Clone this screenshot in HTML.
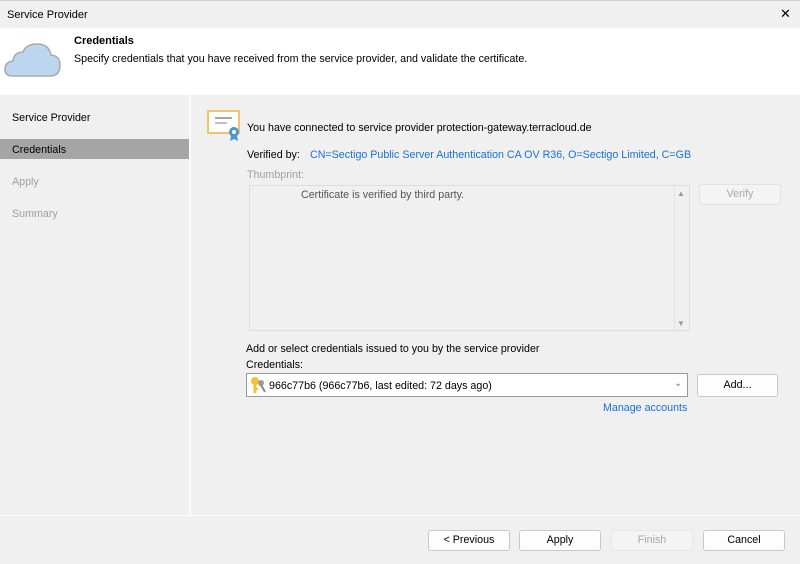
<!DOCTYPE html>
<html><head><style>
*{margin:0;padding:0;box-sizing:border-box}
body{width:800px;height:564px;position:relative;background:#f0f0f0;font-family:"Liberation Sans",sans-serif;font-size:10.7px;color:#000;overflow:hidden}
.a{position:absolute}
.btn{position:absolute;height:21px;border:1px solid #c8c8c8;border-radius:3px;background:#fdfdfd;text-align:center;line-height:19px;font-size:10.7px}
</style></head><body>
<div class="a" style="left:0;top:0;width:800px;height:28px;background:#f0f0f0;border-top:1px solid #cfcfcf"></div>
<div class="a" style="left:7px;top:9px;font-size:11px">Service Provider</div>
<div class="a" style="left:780px;top:6px;font-size:13px">✕</div>
<div class="a" style="left:0;top:28px;width:800px;height:67px;background:#fff"></div>
<svg class="a" style="left:4px;top:42px" width="58" height="36" viewBox="0 0 58 36"><path d="M8 34 Q1 34 1 27 Q1 20 9 19 Q10 10 19 10 Q22 2 33 2 Q45 2 47 13 Q56 14 56 23 Q56 34 46 34 Z" fill="#bcd6ef" stroke="#a9a9a9" stroke-width="1.5"/></svg>
<div class="a" style="left:74px;top:35px;font-weight:bold;font-size:11px">Credentials</div>
<div class="a" style="left:74px;top:53px">Specify credentials that you have received from the service provider, and validate the certificate.</div>
<div class="a" style="left:0;top:95px;width:189px;height:420px;background:#f0f0f0"></div>
<div class="a" style="left:189px;top:95px;width:2px;height:420px;background:#fafafa"></div>
<div class="a" style="left:12px;top:112px">Service Provider</div>
<div class="a" style="left:0;top:139px;width:189px;height:20px;background:#a5a5a5"></div>
<div class="a" style="left:12px;top:144px">Credentials</div>
<div class="a" style="left:12px;top:176px;color:#a0a0a0">Apply</div>
<div class="a" style="left:12px;top:208px;color:#a0a0a0">Summary</div>
<svg class="a" style="left:207px;top:110px" width="34" height="32"><rect x="1" y="1" width="31" height="22" fill="#fff" stroke="#f1c36a" stroke-width="2"/><line x1="8" y1="8" x2="25" y2="8" stroke="#888" stroke-width="1.5"/><line x1="8" y1="13" x2="20" y2="13" stroke="#aaa" stroke-width="1.5"/><circle cx="27" cy="22" r="5" fill="#4b95d0"/><path d="M24 26 L23 31 L27 29 L31 31 L30 26" fill="#4b95d0"/><circle cx="27" cy="22" r="2" fill="#fff"/></svg>
<div class="a" style="left:247px;top:122px">You have connected to service provider protection-gateway.terracloud.de</div>
<div class="a" style="left:247px;top:149px">Verified by:</div>
<div class="a" style="left:310px;top:149px;color:#1a6fd8">CN=Sectigo Public Server Authentication CA OV R36, O=Sectigo Limited, C=GB</div>
<div class="a" style="left:247px;top:169px;color:#a0a0a0">Thumbprint:</div>
<div class="a" style="left:249px;top:185px;width:441px;height:146px;border:1px solid #dcdcdc;background:#f0f0f0"></div>
<div class="a" style="left:674px;top:186px;width:15px;height:144px;border-left:1px solid #e2e2e2"></div>
<div class="a" style="left:677px;top:189px;font-size:8px;color:#999">▲</div>
<div class="a" style="left:677px;top:319px;font-size:8px;color:#999">▼</div>
<div class="a" style="left:301px;top:189px;color:#555">Certificate is verified by third party.</div>
<div class="btn" style="left:699px;top:184px;width:82px;background:#f4f4f4;border-color:#e2e2e2;color:#a8a8a8">Verify</div>
<div class="a" style="left:246px;top:343px">Add or select credentials issued to you by the service provider</div>
<div class="a" style="left:246px;top:359px">Credentials:</div>
<div class="a" style="left:246px;top:373px;width:442px;height:24px;border:1px solid #9a9a9a;background:#fff"></div>
<svg class="a" style="left:249px;top:376px" width="18" height="18"><circle cx="6" cy="5" r="4" fill="#f2c23a"/><rect x="4.5" y="7" width="3" height="10" fill="#f2c23a"/><rect x="7" y="12" width="2" height="2" fill="#f2c23a"/><circle cx="12" cy="7" r="3" fill="#999"/><path d="M12 9 L16 16" stroke="#888" stroke-width="2"/></svg>
<div class="a" style="left:269px;top:380px">966c77b6 (966c77b6, last edited: 72 days ago)</div>
<div class="a" style="left:674px;top:378px;color:#777;font-size:10px">⌄</div>
<div class="btn" style="left:697px;top:374px;width:81px;height:23px;line-height:21px">Add...</div>
<div class="a" style="left:603px;top:402px;color:#1a6fd8">Manage accounts</div>
<div class="a" style="left:0;top:515px;width:800px;height:1px;background:#fcfcfc"></div>
<div class="btn" style="left:428px;top:530px;width:82px">&lt; Previous</div>
<div class="btn" style="left:519px;top:530px;width:82px">Apply</div>
<div class="btn" style="left:611px;top:530px;width:82px;background:#f4f4f4;border-color:#e6e6e6;color:#a8a8a8">Finish</div>
<div class="btn" style="left:703px;top:530px;width:82px">Cancel</div>
</body></html>
